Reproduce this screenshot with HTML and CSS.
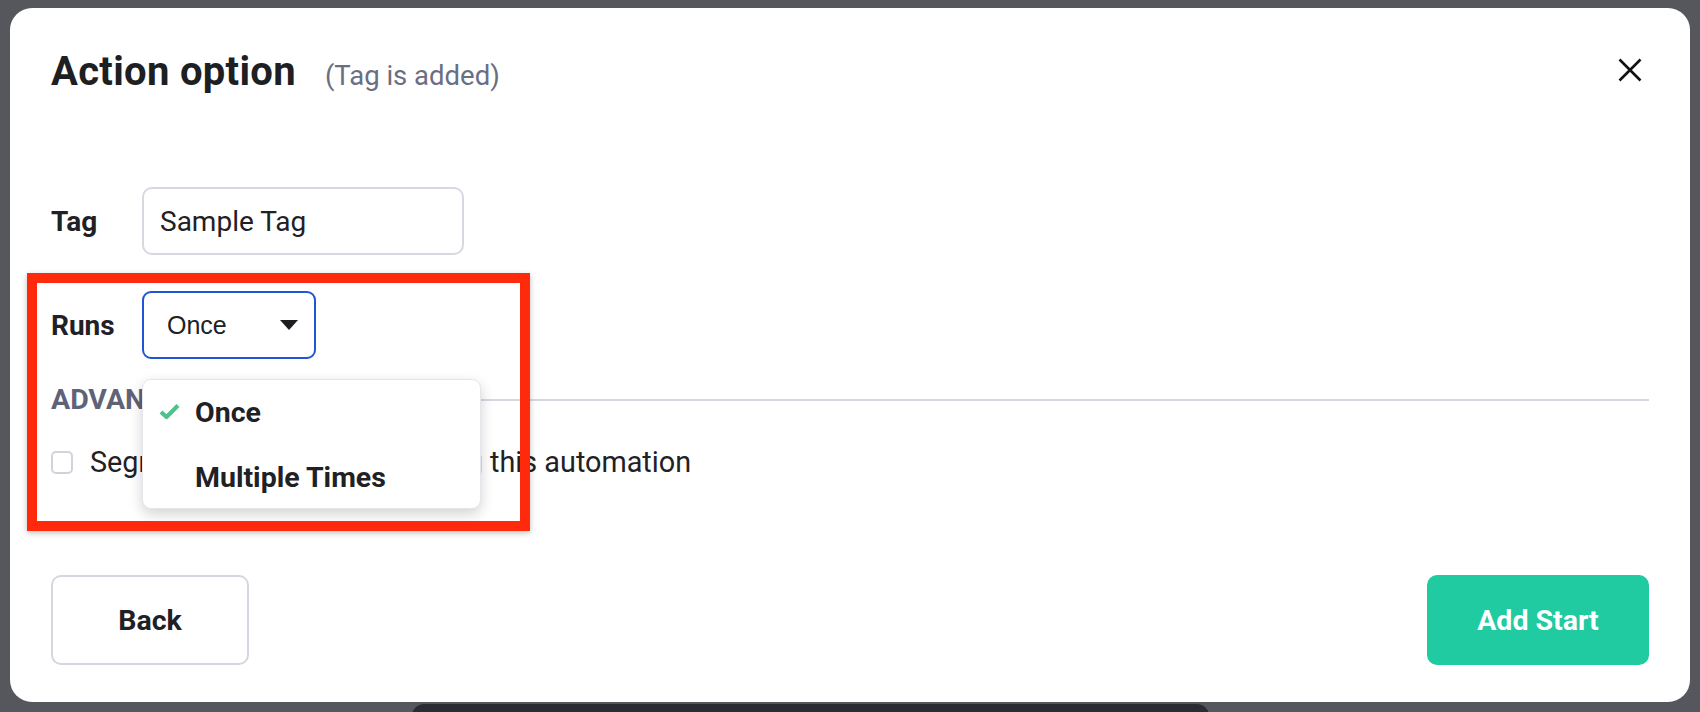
FILE: index.html
```html
<!DOCTYPE html>
<html lang="en">
<head>
    <meta charset="UTF-8">
    <meta name="viewport" content="width=device-width, initial-scale=1.0">
    <title>Action option</title>
    <link rel="stylesheet" href="styles.css">
</head>
<body>
    <!-- Modal -->
    <div class="modal">
        <div class="modal-header">
            <div class="heading">
                <h1>Action option</h1>
                <span class="subtitle">(Tag is added)</span>
            </div>
            <button class="close-btn" aria-label="Close">
                <svg width="24" height="24" viewBox="0 0 24 24">
                    <path d="M1.5 1.5 L22.5 22.5 M22.5 1.5 L1.5 22.5" stroke="#111214" stroke-width="2.6" fill="none"/>
                </svg>
            </button>
        </div>

        <div class="modal-body">
            <div class="field-row">
                <label class="field-label">Tag</label>
                <div class="text-input">Sample Tag</div>
            </div>

            <div class="field-row runs-row">
                <label class="field-label">Runs</label>
                <div class="select">
                    <span>Once</span>
                    <span class="caret"></span>
                </div>
            </div>

            <div class="section-title">
                <span>ADVANCED</span>
                <div class="rule"></div>
            </div>

            <label class="checkbox-row">
                <span class="checkbox"></span>
                Segment the contacts entering this automation
            </label>

            <!-- Open options list of the Runs select -->
            <ul class="dropdown">
                <li class="selected">
                    <span class="check-slot">
                        <svg width="21" height="17" viewBox="0 0 21 17">
                            <path d="M2 9 L7.5 14 L19 2.5" stroke="#4cc38a" stroke-width="4.2" fill="none" stroke-linejoin="round"/>
                        </svg>
                    </span>
                    Once
                </li>
                <li><span class="check-slot"></span>Multiple Times</li>
            </ul>

            <!-- Highlight frame -->
            <div class="highlight"></div>
        </div>

        <div class="modal-footer">
            <button class="btn btn-back">Back</button>
            <button class="btn btn-primary">Add Start</button>
        </div>
    </div>

    <div class="dock"></div>
</body>
</html>
```

FILE: styles.css
```css
html, body {
    height: 100%;
}
body {
    margin: 0;
    padding: 8px 10px 0;
    background-color: #55575d;
    font-family: Roboto, "Liberation Sans", sans-serif;
    color: #1f2125;
    overflow: hidden;
    box-sizing: border-box;
}

.modal {
    background-color: #fff;
    border-radius: 22px;
    height: 694px;
    padding: 40px 41px 0;
    box-sizing: border-box;
    display: flex;
    flex-direction: column;
}

/* Header */
.modal-header {
    display: flex;
    align-items: center;
    justify-content: space-between;
    height: 48px;
}
.heading {
    display: flex;
    align-items: baseline;
}
h1 {
    font-size: 40px;
    font-weight: 700;
    letter-spacing: 0.3px;
    line-height: 48px;
    margin: 0;
    color: #1d1f23;
}
.subtitle {
    font-size: 27.5px;
    color: #6b6e82;
    margin-left: 29px;
}
.close-btn {
    background: none;
    border: none;
    padding: 0;
    margin: -4px 7px 0 0;
    cursor: pointer;
    display: flex;
}

/* Body */
.modal-body {
    position: relative;
    margin-top: 91px;
}
.field-row {
    display: flex;
    align-items: center;
    height: 68px;
}
.runs-row {
    margin-top: 36px;
}
.field-label {
    width: 91px;
    font-size: 28px;
    font-weight: 700;
}
.text-input {
    width: 322px;
    height: 68px;
    box-sizing: border-box;
    border: 2px solid #d6d9e0;
    border-radius: 10px;
    padding-left: 16px;
    display: flex;
    align-items: center;
    font-size: 28px;
}
.select {
    width: 174px;
    height: 68px;
    box-sizing: border-box;
    border: 2px solid #1f55d6;
    border-radius: 9px;
    padding: 0 16px 0 23px;
    display: flex;
    align-items: center;
    justify-content: space-between;
    font-family: "Liberation Sans", Arial, sans-serif;
    font-size: 25px;
    color: #202124;
}
.caret {
    width: 0;
    height: 0;
    border-left: 9.5px solid transparent;
    border-right: 9.5px solid transparent;
    border-top: 10px solid #1c1d21;
}

.section-title {
    display: flex;
    align-items: center;
    margin-top: 24px;
    height: 32px;
    font-size: 28.5px;
    font-weight: 700;
    color: #5f6378;
}
.rule {
    flex: 1;
    height: 2px;
    background-color: #d5d8df;
    margin-left: 20px;
    margin-top: 2px;
}

.checkbox-row {
    display: flex;
    align-items: center;
    margin-top: 31px;
    height: 32px;
    font-size: 28.8px;
}
.checkbox {
    width: 22px;
    height: 23px;
    box-sizing: border-box;
    border: 2px solid #d0d3da;
    border-radius: 5px;
    margin-right: 17px;
}

.dropdown {
    position: absolute;
    left: 91px;
    top: 192px;
    width: 339px;
    margin: 0;
    padding: 0;
    list-style: none;
    background-color: #fff;
    border: 1px solid #e4e6eb;
    border-radius: 9px;
    box-shadow: 0 5px 14px rgba(0, 0, 0, 0.18);
    box-sizing: border-box;
    height: 130px;
}
.dropdown li {
    display: flex;
    align-items: center;
    height: 64px;
    padding-left: 16px;
    font-size: 28.5px;
    font-weight: 700;
    color: #1f2125;
}
.dropdown li + li {
    height: 66px;
}
.check-slot {
    width: 36px;
    display: flex;
    align-items: center;
    margin-top: -2px;
}

.highlight {
    position: absolute;
    left: -24px;
    top: 86px;
    width: 503px;
    height: 258px;
    box-sizing: border-box;
    border: 10px solid #fe2a0b;
    box-shadow: 0 2px 6px rgba(0, 0, 0, 0.25);
}

/* Footer */
.modal-footer {
    display: flex;
    justify-content: space-between;
    margin-top: 97px;
}
.btn {
    height: 90px;
    border-radius: 10px;
    font-family: Roboto, "Liberation Sans", sans-serif;
    font-size: 28.5px;
    font-weight: 700;
    cursor: pointer;
}
.btn-back {
    width: 198px;
    background-color: #fff;
    border: 2px solid #d4d7de;
    color: #1f2125;
}
.btn-primary {
    width: 222px;
    background-color: #20cba2;
    border: none;
    color: #fff;
}

.dock {
    width: 797px;
    height: 20px;
    margin: 2px 0 0 402px;
    background-color: #2a2c31;
    border-radius: 12px 12px 0 0;
}
```
